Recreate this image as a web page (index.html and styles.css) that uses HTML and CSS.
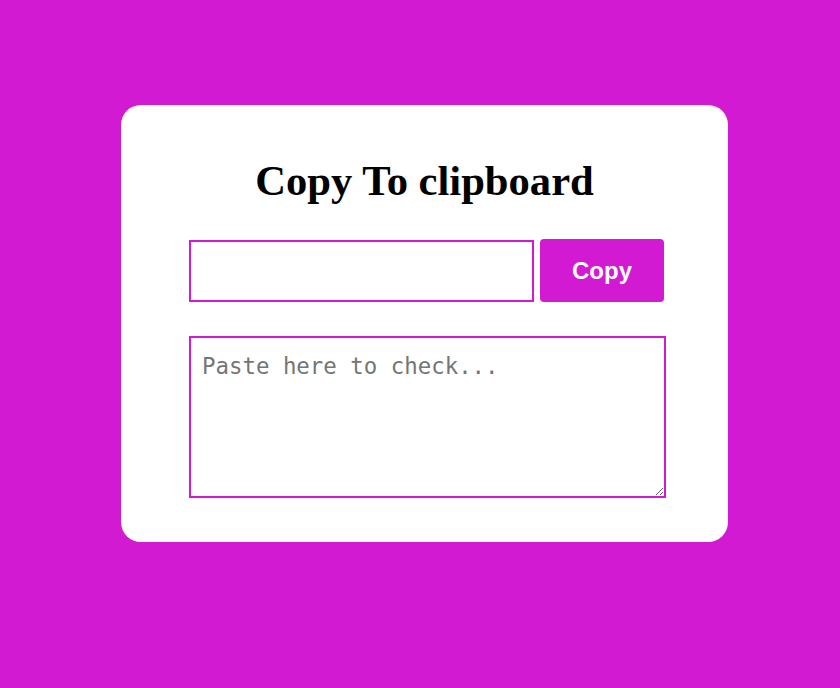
FILE: index.html
```html
<!DOCTYPE html>
<html>
<head>
<meta charset="utf-8">
<link rel="stylesheet" href="styles.css">
</head>
<body>
<div class="card">
  <h1 class="title">Copy To clipboard</h1>
  <div class="row">
    <input class="field" type="text">
    <button class="btn">Copy</button>
  </div>
  <textarea class="area" placeholder="Paste here to check..."></textarea>
</div>
</body>
</html>
```
FILE: styles.css
```css
html, body {
  margin: 0;
  padding: 0;
}
body {
  background: #d21ad2;
  width: 840px;
  height: 688px;
  padding-top: 105px;
  box-sizing: border-box;
}
.card {
  box-sizing: border-box;
  width: 607px;
  height: 437px;
  margin-left: 121px;
  background: #fff;
  border-radius: 20px;
  padding: 0 68px;
  display: flex;
  flex-direction: column;
  align-items: flex-start;
}
.title {
  align-self: stretch;
  margin: 50px 0 0 0;
  font-family: "Liberation Serif", serif;
  font-weight: bold;
  font-size: 42.6px;
  line-height: 52px;
  text-align: center;
  color: #000;
}
.row {
  display: flex;
  gap: 6px;
  margin-top: 32px;
  align-items: flex-end;
}
.field {
  box-sizing: border-box;
  width: 345px;
  height: 62px;
  margin: 0;
  border: 2px solid #d21ad2;
  outline: none;
  padding: 0 10px;
  font-size: 20px;
}
.btn {
  box-sizing: border-box;
  width: 124px;
  height: 63px;
  margin: 0;
  border: none;
  border-radius: 4px;
  background: #d21ad2;
  color: #fff;
  font-family: "Liberation Sans", Arial, sans-serif;
  font-weight: bold;
  font-size: 24px;
}
.area {
  flex: none;
  box-sizing: border-box;
  width: 477px;
  height: 162px;
  margin: 34px 0 0 0;
  border: 2px solid #d21ad2;
  outline: none;
  padding: 15px 11px 10px;
  font-family: "DejaVu Sans Mono", monospace;
  font-size: 22.4px;
}
.area::placeholder {
  color: #757575;
}
```
